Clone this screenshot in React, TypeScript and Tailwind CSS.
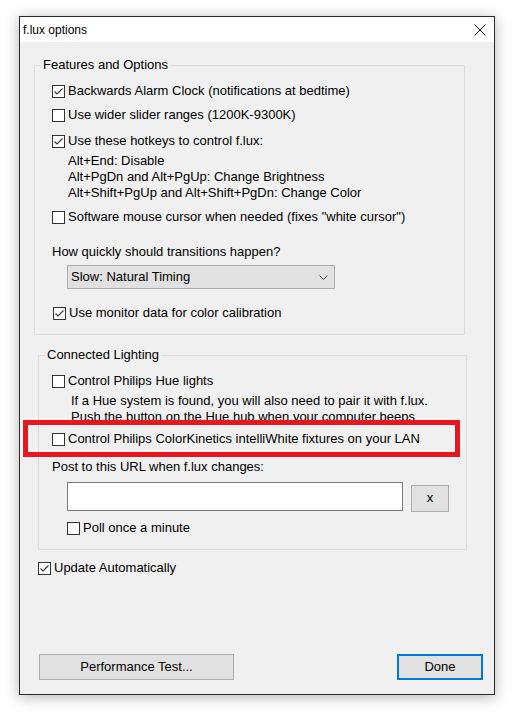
import React from "react"

function Box({ checked }: { checked?: boolean }) {
  return (
    <span className="flex h-[13px] w-[13px] shrink-0 items-center justify-center border border-[#333] bg-white">
      {checked && (
        <svg width="11" height="11" viewBox="0 0 11 11" aria-hidden>
          <polyline points="1.5,5.5 4,8 9.5,2.5" fill="none" stroke="#333" strokeWidth="1.1" />
        </svg>
      )}
    </span>
  )
}

function Check({ checked, label, className = "" }: { checked?: boolean; label: string; className?: string }) {
  return (
    <div className={`flex h-[16px] items-center gap-[3px] ${className}`}>
      <Box checked={checked} />
      <span className="whitespace-nowrap leading-[16px]">{label}</span>
    </div>
  )
}

export default function App() {
  return (
    <div className="min-h-[713px] bg-white pl-[19px] pt-[16px] font-['Liberation_Sans',Arial,sans-serif] text-[13px] text-black">
      <div className="relative flex h-[679px] w-[476px] flex-col border border-[#2b2b2b] bg-[#f0f0f0] shadow-[0_2px_14px_rgba(0,0,0,0.3)]">
        {/* title bar */}
        <div className="flex h-[25px] items-center justify-between bg-white pl-[3px] pr-[8px]">
          <span className="text-[12px] leading-[14px]">f.lux options</span>
          <svg width="12" height="12" viewBox="0 0 12 12" aria-hidden>
            <path d="M0.5 0.5 L11.5 11.5 M11.5 0.5 L0.5 11.5" stroke="#111" strokeWidth="1" />
          </svg>
        </div>

        {/* Features and Options */}
        <fieldset className="ml-[14px] mt-[16px] w-[429px] border border-[#dcdcdc] pb-[13px]">
          <legend className="ml-[6px] px-[2px] leading-[14px]">Features and Options</legend>
          <div className="flex flex-col pl-[17px]">
            <Check checked label="Backwards Alarm Clock (notifications at bedtime)" className="mt-[11px]" />
            <Check label="Use wider slider ranges (1200K-9300K)" className="mt-[8px]" />
            <Check checked label="Use these hotkeys to control f.lux:" className="mt-[10px]" />
            <div className="ml-[16px] mt-[4px] flex flex-col leading-[16px]">
              <span>Alt+End: Disable</span>
              <span>Alt+PgDn and Alt+PgUp: Change Brightness</span>
              <span>Alt+Shift+PgUp and Alt+Shift+PgDn: Change Color</span>
            </div>
            <Check label={'Software mouse cursor when needed (fixes "white cursor")'} className="mt-[8px]" />
            <span className="mt-[19px] leading-[16px]">How quickly should transitions happen?</span>
            <div className="ml-[15px] mt-[5px] flex h-[24px] w-[268px] items-center justify-between border border-[#adadad] bg-[#e1e1e1] pl-[3px] pr-[6px]">
              <span>Slow: Natural Timing</span>
              <svg width="9" height="5" viewBox="0 0 9 5" aria-hidden>
                <polyline points="0.5,0.5 4.5,4.5 8.5,0.5" fill="none" stroke="#444" strokeWidth="1" />
              </svg>
            </div>
            <Check checked label="Use monitor data for color calibration" className="relative ml-[1px] mt-[16px] w-[411px] bg-[#f0f0f0]" />
          </div>
        </fieldset>

        {/* Connected Lighting */}
        <fieldset className="ml-[18px] mt-[13px] w-[429px] border border-[#dcdcdc] pb-[13px]">
          <legend className="ml-[6px] px-[2px] leading-[14px]">Connected Lighting</legend>
          <div className="flex flex-col pl-[13px]">
            <Check label="Control Philips Hue lights" className="mt-[11px]" />
            <div className="ml-[19px] mt-[4px] flex flex-col leading-[16px]">
              <span>If a Hue system is found, you will also need to pair it with f.lux.</span>
              <span>Push the button on the Hue hub when your computer beeps</span>
            </div>
            <Check label="Control Philips ColorKinetics intelliWhite fixtures on your LAN" className="mt-[6px]" />
            <span className="mt-[12px] leading-[16px]">Post to this URL when f.lux changes:</span>
            <div className="ml-[15px] mt-[7px] flex items-start gap-[8px]">
              <div className="h-[29px] w-[336px] border border-[#7a7a7a] bg-white" />
              <div className="mt-[3px] flex h-[27px] w-[38px] items-center justify-center border border-[#adadad] bg-[#e1e1e1] pb-[2px]">
                x
              </div>
            </div>
            <Check label="Poll once a minute" className="ml-[15px] mt-[8px]" />
          </div>
        </fieldset>

        <Check checked label="Update Automatically" className="ml-[18px] mt-[10px]" />

        <div className="mt-[78px] flex items-center justify-between pl-[19px] pr-[11px]">
          <div className="flex h-[26px] w-[195px] items-center justify-center border border-[#adadad] bg-[#e1e1e1]">
            Performance Test...
          </div>
          <div className="flex h-[26px] w-[86px] items-center justify-center border-2 border-[#0078d7] bg-[#e1e1e1]">
            Done
          </div>
        </div>

        {/* red highlight */}
        <div className="pointer-events-none absolute left-[3px] top-[403px] h-[37px] w-[437px] border-[5px] border-[#e8161f]" />
      </div>
    </div>
  )
}
